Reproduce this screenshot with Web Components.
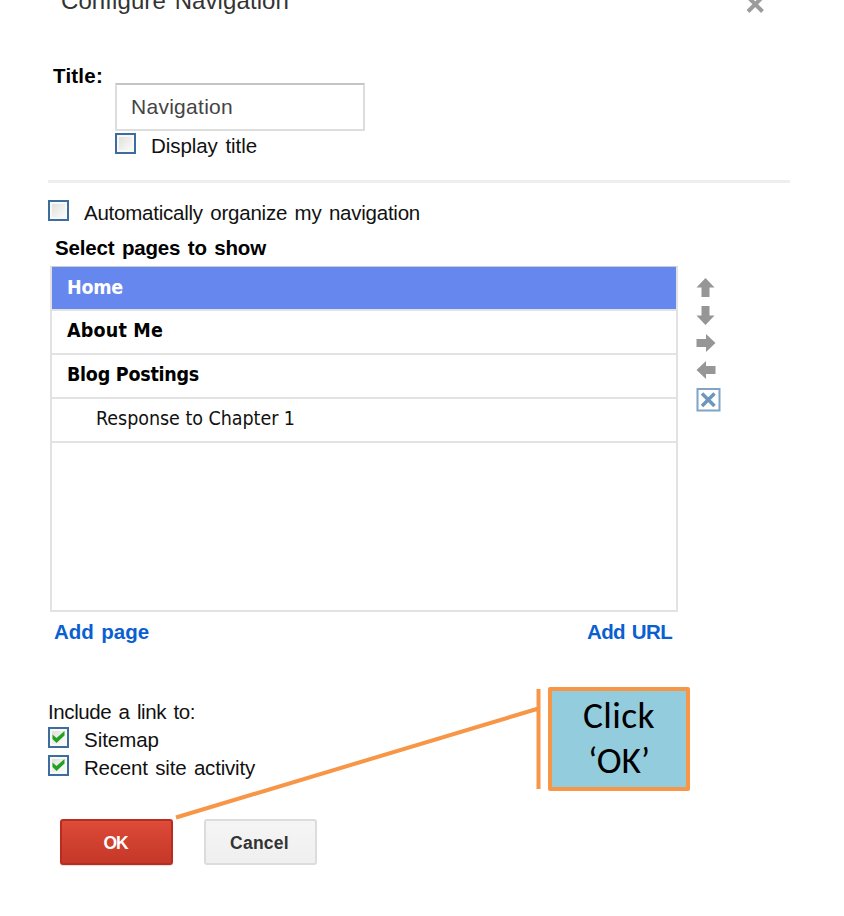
<!DOCTYPE html>
<html lang="en">
<head>
<meta charset="utf-8">
<title>Configure Navigation</title>
<style>
  html, body {
    margin: 0;
    width: 844px;
    height: 916px;
    overflow: hidden;
    background: #fff;
  }
</style>
</head>
<body>
<nav-dialog>
  <fit-text slot="title" width="228">Configure Navigation</fit-text>
  <fit-text slot="label" width="50">Title:</fit-text>
  <text-field slot="field"><fit-text width="102">Navigation</fit-text></text-field>
  <check-box slot="field"><fit-text width="106">Display title</fit-text></check-box>

  <check-box slot="organize"><fit-text width="336">Automatically organize my navigation</fit-text></check-box>
  <fit-text slot="heading" width="211">Select pages to show</fit-text>

  <page-item slot="page" selected><fit-text width="56">Home</fit-text></page-item>
  <page-item slot="page"><fit-text width="96">About Me</fit-text></page-item>
  <page-item slot="page"><fit-text width="132">Blog Postings</fit-text></page-item>
  <page-item slot="page" child><fit-text width="199">Response to Chapter 1</fit-text></page-item>

  <tool-icon slot="tool" name="up"></tool-icon>
  <tool-icon slot="tool" name="down"></tool-icon>
  <tool-icon slot="tool" name="right"></tool-icon>
  <tool-icon slot="tool" name="left"></tool-icon>
  <tool-icon slot="tool" name="remove"></tool-icon>

  <fit-text slot="link" width="95">Add page</fit-text>
  <fit-text slot="link" width="85">Add URL</fit-text>

  <fit-text slot="include" width="147">Include a link to:</fit-text>
  <check-box slot="include" checked><fit-text width="75">Sitemap</fit-text></check-box>
  <check-box slot="include" checked><fit-text width="171">Recent site activity</fit-text></check-box>

  <push-button slot="button" primary><fit-text width="24">OK</fit-text></push-button>
  <push-button slot="button"><fit-text width="59">Cancel</fit-text></push-button>
</nav-dialog>
<call-out>
  <fit-text width="72">Click</fit-text>
  <fit-text width="62">‘OK’</fit-text>
</call-out>

<script>
function define(name, html, setup) {
  const template = document.createElement("template");
  template.innerHTML = html;

  customElements.define(name, class extends HTMLElement {
    constructor() {
      super();
      this.attachShadow({ mode: "open" });
      this.shadowRoot.appendChild(template.content.cloneNode(true));
    }

    connectedCallback() {
      if (setup) {
        setup(this);
      }
    }
  });
}

define("nav-dialog", `
  <style>
    :host {
      display: block;
      width: 844px;
      color: #111;
      font: 20.5px/28px "Liberation Sans", Arial, sans-serif;
      word-spacing: 2px;
    }
    header {
      display: flex;
      justify-content: space-between;
      height: 75px;
      margin-top: -13px;
      padding: 0 79px 0 61px;
      color: #333;
      font-size: 24px;
    }
    header svg { margin-top: 7px; }
    .title {
      display: flex;
      height: 98px;
      padding-left: 53px;
    }
    .label {
      width: 62px;
      color: #000;
      font-weight: bold;
    }
    .fields { padding-top: 21px; }
    hr {
      width: 742px;
      height: 3px;
      margin: 20px 0 16px 48px;
      border: 0;
      background: #eee;
    }
    .organize, .include { padding-left: 48px; }
    .heading {
      padding: 7px 0 4px 55px;
      color: #000;
      font-weight: bold;
    }
    .pages {
      display: flex;
      padding-left: 50px;
    }
    .list {
      box-sizing: border-box;
      width: 628px;
      height: 346px;
      border: 2px solid #e2e2e2;
      border-top: 1px solid #ccc;
    }
    .tools {
      display: flex;
      flex-direction: column;
      padding: 12px 0 0 18px;
    }
    .links {
      display: flex;
      justify-content: space-between;
      width: 618px;
      padding: 6px 0 52px 54px;
      color: #0a60d0;
      font-weight: bold;
    }
    .buttons {
      display: flex;
      gap: 31px;
      padding: 37px 0 0 60px;
    }
  </style>
  <header>
    <slot name="title"></slot>
    <svg width="19" height="20" viewBox="0 0 19 20" stroke="#9c9c9c" stroke-width="4">
      <path d="M2 3 16.500 17.500M16.500 3 2 17.500"/>
    </svg>
  </header>
  <div class="title">
    <div class="label"><slot name="label"></slot></div>
    <div class="fields"><slot name="field"></slot></div>
  </div>
  <hr>
  <div class="organize"><slot name="organize"></slot></div>
  <div class="heading"><slot name="heading"></slot></div>
  <div class="pages">
    <div class="list"><slot name="page"></slot></div>
    <div class="tools"><slot name="tool"></slot></div>
  </div>
  <div class="links"><slot name="link"></slot></div>
  <div class="include"><slot name="include"></slot></div>
  <div class="buttons"><slot name="button"></slot></div>
`);

// one line of text, tracked so that it fills the given width
define("fit-text", `
  <style>
    :host {
      display: block;
      white-space: nowrap;
    }
    span { display: inline-block; }
  </style>
  <span><slot></slot></span>
`, function (el) {
  const width = Number(el.getAttribute("width"));
  const span = el.shadowRoot.querySelector("span");
  el.style.width = width + "px";
  requestAnimationFrame(() => {
    const length = el.textContent.length;
    const natural = span.getBoundingClientRect().width;
    span.style.letterSpacing = (width - natural) / length + "px";
  });
});

define("text-field", `
  <style>
    :host {
      display: block;
      box-sizing: border-box;
      width: 250px;
      height: 48px;
      margin-bottom: 1px;
      padding: 8px 0 0 14px;
      border: 2px solid #ddd;
      border-top-color: #c4c4c4;
      color: #444;
      font-size: 21px;
    }
  </style>
  <slot></slot>
`);

define("check-box", `
  <style>
    :host {
      display: flex;
      gap: 15px;
      height: 28px;
    }
    .box {
      box-sizing: border-box;
      width: 21px;
      height: 21px;
      margin-top: 1px;
      border: 2px solid #3d6d9e;
      background: linear-gradient(135deg, #dcdcd7, #fff);
      box-shadow: inset 0 0 0 2px #f8f8f6;
    }
    svg { display: none; }
    :host([checked]) svg { display: block; }
  </style>
  <div class="box">
    <svg width="17" height="17" viewBox="0 0 17 17">
      <path d="M2.500 5.500 6.500 9 14.500 2V6.500L6.500 14 2.500 10Z" fill="#21a121"/>
    </svg>
  </div>
  <slot></slot>
`);

define("page-item", `
  <style>
    :host {
      display: block;
      box-sizing: border-box;
      height: 44px;
      padding: 6px 0 0 15px;
      border-bottom: 2px solid #e2e2e2;
      color: #000;
      font: bold 19.5px/28px "DejaVu Sans Condensed", "DejaVu Sans", sans-serif;
      font-stretch: condensed;
      word-spacing: 0;
    }
    :host([selected]) {
      padding-top: 7px;
      background: #6587ee;
      color: #fff;
    }
    :host([child]) {
      padding-left: 44px;
      color: #111;
      font-weight: normal;
    }
  </style>
  <slot></slot>
`);

const icons = {
  up: '<path d="M9.500 0 18.500 9.500H13.500V19H5.500V9.500H.5Z" fill="#969696"/>',
  down: '<path d="M5.500 0H13.500V9.500H18.500L9.500 19 .5 9.500H5.500Z" fill="#969696"/>',
  right: '<path d="M.5 6H10V1L19.500 10 10 19V14H.5Z" fill="#969696"/>',
  left: '<path d="M19.500 5H10V0L.5 9 10 18V13H19.500Z" fill="#969696"/>',
  remove: '<path d="M1.500 1H23.500V22.500H1.500Z" fill="#fff" stroke="#7fa4c6" stroke-width="2"/>' +
    '<path d="M6 5.500 18.500 18M18.500 5.500 6 18" stroke="#6d96bd" stroke-width="3.500"/>'
};

define("tool-icon", `
  <style>
    :host {
      display: block;
      height: 27.500px;
    }
    svg { display: block; }
  </style>
  <svg width="25" height="24" viewBox="0 0 25 24"></svg>
`, function (el) {
  el.shadowRoot.querySelector("svg").innerHTML = icons[el.getAttribute("name")];
});

define("push-button", `
  <style>
    :host {
      display: flex;
      justify-content: center;
      box-sizing: border-box;
      width: 113px;
      height: 46px;
      padding: 8px 2px 0 0;
      border: 2px solid #dcdcdc;
      border-radius: 3px;
      background: linear-gradient(#f5f5f5, #efefef);
      color: #333;
      font-size: 17.5px;
      font-weight: bold;
    }
    :host([primary]) {
      border-color: #b92d20;
      background: linear-gradient(#dd4b39, #c53727);
      box-shadow: 0 1px 1px #ddd;
      color: #fff;
    }
  </style>
  <slot></slot>
`);

// annotation that lies over the dialog, with its leader line to the OK button
define("call-out", `
  <style>
    :host {
      position: absolute;
      left: 170px;
      top: 687px;
      display: flex;
      color: #000;
      font: 37.5px/45px Carlito, Lato, sans-serif;
    }
    .box {
      box-sizing: border-box;
      display: flex;
      flex-direction: column;
      align-items: center;
      width: 142px;
      height: 104px;
      padding-top: 2px;
      border: 4px solid #f79646;
      border-radius: 2px;
      background: #93cddd;
    }
  </style>
  <svg width="378" height="135" viewBox="0 0 378 135" fill="none" stroke="#f79646" stroke-width="4">
    <path d="M6 130.500 368.500 21.500M368.500 2V102"/>
  </svg>
  <div class="box"><slot></slot></div>
`);
</script>
</body>
</html>
